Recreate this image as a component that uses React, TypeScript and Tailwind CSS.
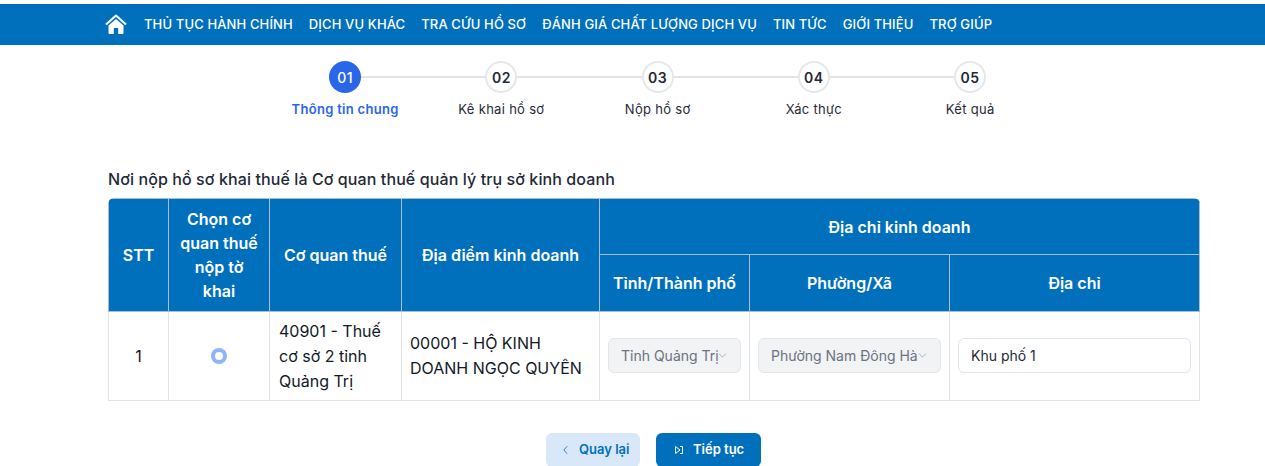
const navItems = [
  'THỦ TỤC HÀNH CHÍNH',
  'DỊCH VỤ KHÁC',
  'TRA CỨU HỒ SƠ',
  'ĐÁNH GIÁ CHẤT LƯỢNG DỊCH VỤ',
  'TIN TỨC',
  'GIỚI THIỆU',
  'TRỢ GIÚP',
]

const steps = ['Thông tin chung', 'Kê khai hồ sơ', 'Nộp hồ sơ', 'Xác thực', 'Kết quả']

const thClass = 'border border-[#a9bdd3] bg-[#0170bc] px-2 text-center text-[16px] font-semibold leading-6 text-white'
const tdClass = 'border border-[#e0e3ea] px-2 text-[16px] leading-[25px] text-[#111827]'

function HomeIcon() {
  return (
    <svg viewBox="0 0 22 21" className="h-[21px] w-[22px]" fill="none">
      <path d="M1 10.500 11 1.500l10 9" stroke="white" strokeWidth="2" strokeLinejoin="round" />
      <path fillRule="evenodd" clipRule="evenodd" d="M11 5 3.500 11.500V19a1 1 0 0 0 1 1h4.300v-6h4.400v6h4.300a1 1 0 0 0 1-1v-7.500L11 5Z" fill="white" />
    </svg>
  )
}

function Chevron() {
  return (
    <svg viewBox="0 0 10 6" className="absolute right-[14px] top-[15px] h-[5px] w-[9px]" fill="none">
      <path d="M1 1l4 4 4-4" stroke="#9ca3af" strokeWidth="1" />
    </svg>
  )
}

function LockedSelect({ value }: { value: string }) {
  return (
    <div className="relative">
      <select
        disabled
        value={value}
        onChange={() => {}}
        className="h-[35px] w-full appearance-none overflow-hidden text-clip whitespace-nowrap rounded-md border border-[#e2e5ea] bg-[#f2f3f5] pl-[12px] pr-[21px] text-[14px] text-[#6b7280] opacity-100"
      >
        <option>{value}</option>
      </select>
      <Chevron />
    </div>
  )
}

export default function App() {
  return (
    <div className="h-[466px] overflow-hidden bg-white pt-1 font-['Inter',sans-serif]">
      <nav className="flex h-[41px] items-center bg-[#0170bc] pl-[105px]">
        <HomeIcon />
        <ul className="ml-[17px] flex gap-[16px]">
          {navItems.map((item) => (
            <li key={item} className="text-[13px] font-medium tracking-[0.13px] text-white">
              {item}
            </li>
          ))}
        </ul>
      </nav>

      <div className="ml-[267px] mt-4 flex">
        {steps.map((step, i) => (
          <div key={step} className="flex w-[156.25px] flex-col items-center">
            <div className="flex w-full items-center">
              <div className={`h-[2px] flex-1 ${i === 0 ? '' : 'bg-[#e2e3e7]'}`} />
              <div
                className={`flex h-8 w-8 items-center justify-center rounded-full text-[14px] tracking-[0.5px] ${
                  i === 0
                    ? 'bg-[#2a66e8] font-medium text-white'
                    : 'border-2 border-[#e5e7eb] bg-white font-semibold text-[#1f2937]'
                }`}
              >
                {String(i + 1).padStart(2, '0')}
              </div>
              <div className={`h-[2px] flex-1 ${i === 4 ? '' : 'bg-[#e2e3e7]'}`} />
            </div>
            <div
              className={`mt-[6px] text-[13px] leading-5 tracking-[0.3px] ${
                i === 0 ? 'font-semibold text-[#2a66e8]' : 'text-[#1f2937]'
              }`}
            >
              {step}
            </div>
          </div>
        ))}
      </div>

      <div className="ml-[108px] w-[1092px]">
        <h2 className="mt-[48px] text-[16px] font-medium leading-6 tracking-[0.1px] text-[#1f2937]">
          Nơi nộp hồ sơ khai thuế là Cơ quan thuế quản lý trụ sở kinh doanh
        </h2>

        <div className="mt-[7px] overflow-hidden rounded-t-md">
          <table className="w-[1091px] table-fixed border-collapse">
            <colgroup>
              <col className="w-[60px]" />
              <col className="w-[101px]" />
              <col className="w-[132px]" />
              <col className="w-[198px]" />
              <col className="w-[150px]" />
              <col className="w-[200px]" />
              <col className="w-[250px]" />
            </colgroup>
            <thead>
              <tr className="h-[56px]">
                <th rowSpan={2} className={thClass}>STT</th>
                <th rowSpan={2} className={thClass}>Chọn cơ quan thuế nộp tờ khai</th>
                <th rowSpan={2} className={thClass}>Cơ quan thuế</th>
                <th rowSpan={2} className={thClass}>Địa điểm kinh doanh</th>
                <th colSpan={3} className={thClass}>Địa chỉ kinh doanh</th>
              </tr>
              <tr className="h-[57px]">
                <th className={thClass}>Tỉnh/Thành phố</th>
                <th className={thClass}>Phường/Xã</th>
                <th className={thClass}>Địa chỉ</th>
              </tr>
            </thead>
            <tbody>
              <tr className="h-[89px]">
                <td className={`${tdClass} text-center`}>1</td>
                <td className={tdClass}>
                  <div className="mx-auto flex h-4 w-4 items-center justify-center rounded-full bg-[#8fb4fd]">
                    <div className="h-2 w-2 rounded-full bg-white" />
                  </div>
                </td>
                <td className={`${tdClass} pl-[9px]`}>40901 - Thuế cơ sở 2 tỉnh Quảng Trị</td>
                <td className={tdClass}>00001 - HỘ KINH DOANH NGỌC QUYÊN</td>
                <td className={`${tdClass} pb-[2px]`}><LockedSelect value="Tỉnh Quảng Trị" /></td>
                <td className={`${tdClass} pb-[2px]`}><LockedSelect value="Phường Nam Đông Hà" /></td>
                <td className={`${tdClass} pb-[2px]`}>
                  <input
                    defaultValue="Khu phố 1"
                    className="h-[35px] w-full rounded-md border border-[#e2e5ea] bg-white px-3 text-[14px] text-[#1f2937]"
                  />
                </td>
              </tr>
            </tbody>
          </table>
        </div>
      </div>

      <div className="ml-[546px] mt-8 flex gap-4">
        <button className="flex h-[34px] w-[94px] items-center rounded-md bg-[#d9e8f8] pl-[17px] text-[13px] font-semibold text-[#0170bc]">
          <svg viewBox="0 0 6 10" className="h-[10px] w-[5px]" fill="none">
            <path d="M5 0.500 1 5l4 4.500" stroke="#0170bc" strokeWidth="1" />
          </svg>
          <span className="ml-[11px]">Quay lại</span>
        </button>
        <button className="flex h-[34px] w-[105px] items-center rounded-md bg-[#0170bc] pl-[19px] text-[13px] font-semibold text-white">
          <svg viewBox="0 0 8 8" className="h-2 w-2" fill="none">
            <path d="M0.500 0.500v7L5 4 0.500 0.500ZM5 0.500h2.500v7H5" stroke="white" strokeWidth="1" />
          </svg>
          <span className="ml-[10px]">Tiếp tục</span>
        </button>
      </div>
    </div>
  )
}
